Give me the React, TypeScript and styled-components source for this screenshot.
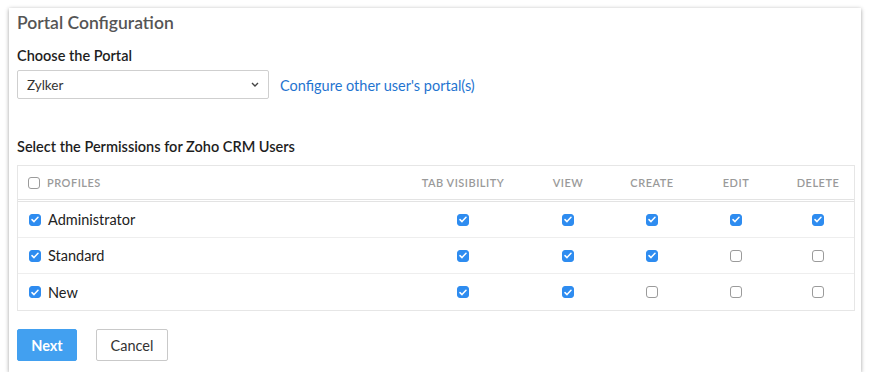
import React from 'react'
import styled, { createGlobalStyle } from 'styled-components'

const GlobalStyle = createGlobalStyle`
  html, body {
    margin: 0;
    padding: 0;
    background: #ffffff;
  }
  body {
    font-family: Lato, 'Open Sans', Arial, sans-serif;
    color: #222;
  }
`

const Panel = styled.div`
  box-sizing: border-box;
  margin: 8px 0 0 9px;
  width: 852px;
  height: 364px;
  background: #fff;
  box-shadow: 0 1px 4px rgba(0, 0, 0, 0.38);
  padding: 5px 6px 0 8px;
  display: flex;
  flex-direction: column;
`

const Title = styled.h1`
  margin: 0;
  font-size: 17.5px;
  font-weight: 600;
  color: #555;
  line-height: 20px;
`

const Label = styled.div`
  margin-top: 14px;
  font-size: 14.5px;
  font-weight: 600;
  color: #1e1e1e;
  line-height: 18px;
`

const PortalRow = styled.div`
  display: flex;
  align-items: center;
  margin-top: 5px;
  gap: 11px;
`

const Select = styled.div`
  box-sizing: border-box;
  width: 252px;
  height: 29px;
  border: 1px solid #cfcfcf;
  border-radius: 2px;
  display: flex;
  align-items: center;
  justify-content: space-between;
  padding: 0 9px 0 9px;
  font-size: 13.5px;
  color: #333;
`

const Link = styled.a`
  font-size: 14.5px;
  color: #1f74d0;
  text-decoration: none;
  margin-top: 2px;
`

const SectionLabel = styled(Label)`
  margin-top: 39px;
`

const Table = styled.div`
  margin-top: 9px;
  width: 838px;
  border: 1px solid #e6e6e6;
  box-sizing: border-box;
`

const Row = styled.div<{ $head?: boolean }>`
  display: grid;
  grid-template-columns: 382px 126px 84px 84px 84px 76px;
  align-items: center;
  height: ${({ $head }) => ($head ? '33px' : '35px')};
  border-bottom: ${({ $head }) => ($head ? '3px double #e3e3e3' : '1px solid #eeeeee')};
  &:last-child {
    border-bottom: none;
    height: 36px;
  }
`

const NameCell = styled.div<{ $head?: boolean }>`
  display: flex;
  align-items: center;
  gap: 7px;
  padding-left: ${({ $head }) => ($head ? '10px' : '11px')};
  font-size: ${({ $head }) => ($head ? '11px' : '14.5px')};
  font-weight: ${({ $head }) => ($head ? 600 : 400)};
  color: ${({ $head }) => ($head ? '#9a9a9a' : '#222')};
  letter-spacing: ${({ $head }) => ($head ? '0.5px' : '0')};
`

const Cell = styled.div`
  display: flex;
  justify-content: center;
  font-size: 11px;
  font-weight: 600;
  color: #9a9a9a;
  letter-spacing: 0.5px;
  &:last-child {
    padding-left: 4px;
  }
`

const Box = styled.span<{ $on: boolean }>`
  box-sizing: border-box;
  width: 12px;
  height: 12px;
  border-radius: 3px;
  display: inline-flex;
  align-items: center;
  justify-content: center;
  background: ${({ $on }) => ($on ? '#2e8cf0' : '#fff')};
  border: 1px solid ${({ $on }) => ($on ? '#2e8cf0' : '#9b9b9b')};
`

const Check: React.FC<{ on: boolean }> = ({ on }) => (
  <Box $on={on}>
    {on && (
      <svg width="8" height="7" viewBox="0 0 8 7">
        <path d="M1 3.6 L3 5.6 L7 1.2" fill="none" stroke="#fff" strokeWidth="1.5" strokeLinecap="round" strokeLinejoin="round" />
      </svg>
    )}
  </Box>
)

const Buttons = styled.div`
  display: flex;
  gap: 19px;
  margin-top: 18px;
`

const Button = styled.button<{ $primary?: boolean }>`
  box-sizing: border-box;
  height: 32px;
  padding: 0;
  width: ${({ $primary }) => ($primary ? '60px' : '72px')};
  border-radius: 2px;
  font-family: inherit;
  font-size: 14.5px;
  font-weight: ${({ $primary }) => ($primary ? 700 : 400)};
  color: ${({ $primary }) => ($primary ? '#fff' : '#333')};
  background: ${({ $primary }) => ($primary ? '#42a0f0' : '#fff')};
  border: 1px solid ${({ $primary }) => ($primary ? '#42a0f0' : '#c9c9c9')};
`

const columns = ['TAB VISIBILITY', 'VIEW', 'CREATE', 'EDIT', 'DELETE']

const profiles = [
  { name: 'Administrator', perms: [true, true, true, true, true] },
  { name: 'Standard', perms: [true, true, true, false, false] },
  { name: 'New', perms: [true, true, false, false, false] },
]

export default function App() {
  return (
    <>
      <GlobalStyle />
      <Panel>
        <Title>Portal Configuration</Title>
        <Label>Choose the Portal</Label>
        <PortalRow>
          <Select>
            <span>Zylker</span>
            <svg width="8" height="5" viewBox="0 0 8 5">
              <path d="M1 1 L4 4 L7 1" fill="none" stroke="#444" strokeWidth="1.4" />
            </svg>
          </Select>
          <Link href="#">Configure other user's portal(s)</Link>
        </PortalRow>
        <SectionLabel>Select the Permissions for Zoho CRM Users</SectionLabel>
        <Table>
          <Row $head>
            <NameCell $head>
              <Check on={false} />
              PROFILES
            </NameCell>
            {columns.map((c) => (
              <Cell key={c}>{c}</Cell>
            ))}
          </Row>
          {profiles.map((p) => (
            <Row key={p.name}>
              <NameCell>
                <Check on />
                {p.name}
              </NameCell>
              {p.perms.map((on, i) => (
                <Cell key={i}>
                  <Check on={on} />
                </Cell>
              ))}
            </Row>
          ))}
        </Table>
        <Buttons>
          <Button $primary>Next</Button>
          <Button>Cancel</Button>
        </Buttons>
      </Panel>
    </>
  )
}
